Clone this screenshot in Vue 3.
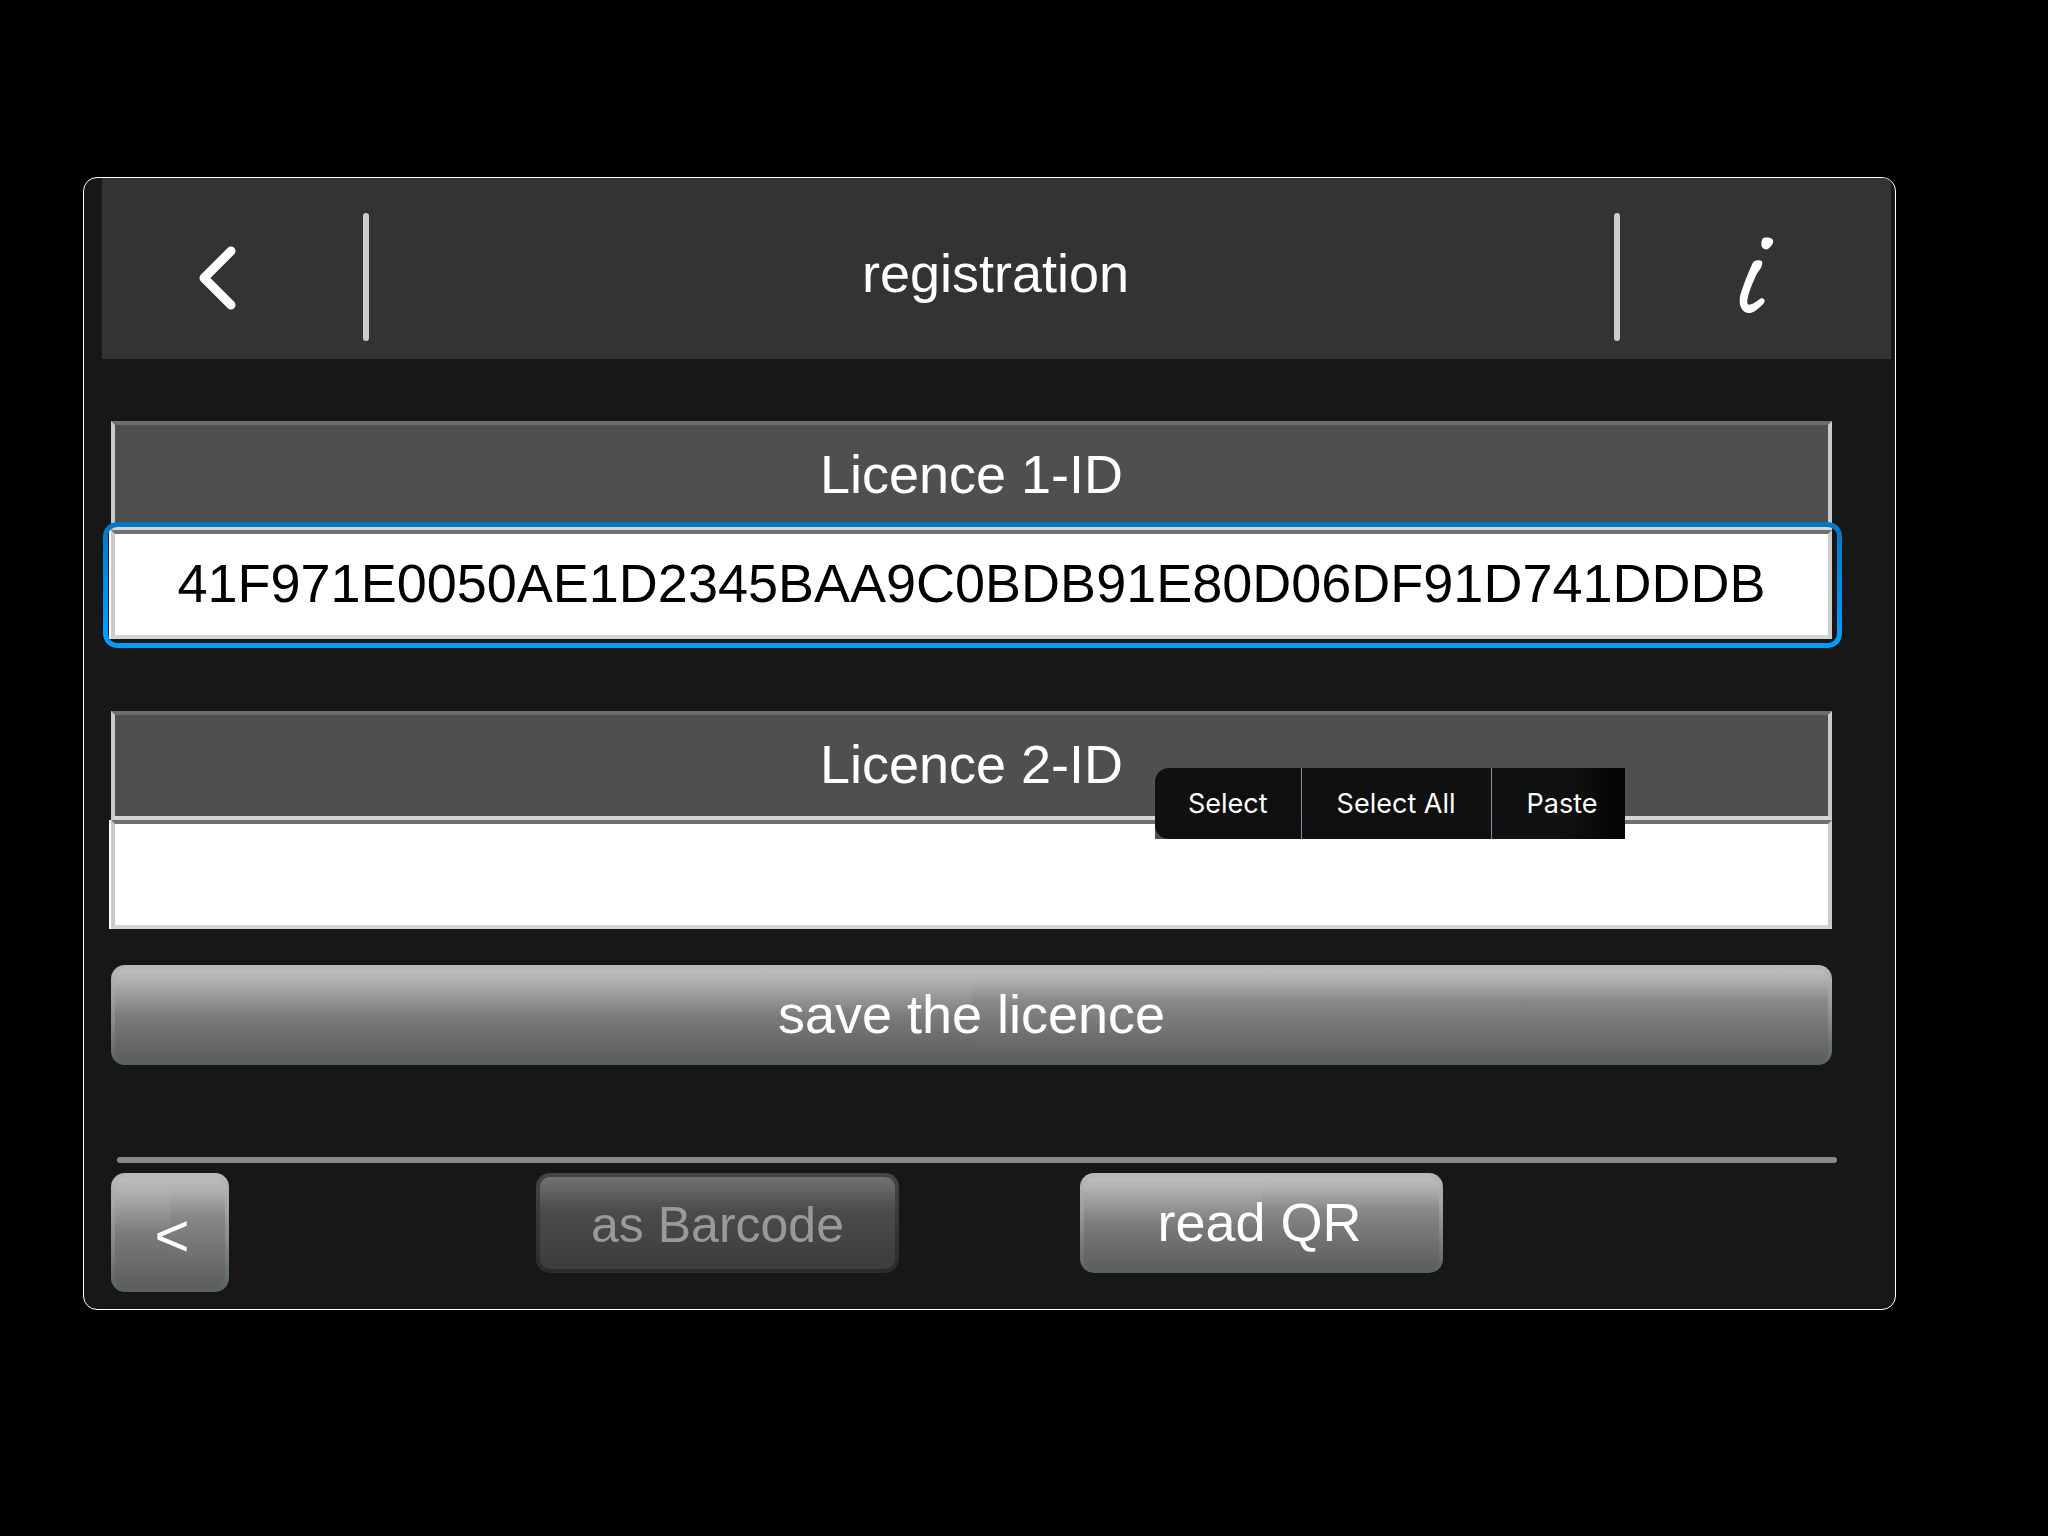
<script setup>
import { ref } from 'vue'

const licences = ref([
  { id: 'licence-1', label: 'Licence 1-ID', value: '41F971E0050AE1D2345BAA9C0BDB91E80D06DF91D741DDDB', active: true, menu: false },
  { id: 'licence-2', label: 'Licence 2-ID', value: '', active: false, menu: true },
])
const menuItems = ['Select', 'Select All', 'Paste']
</script>

<template>
  <div class="screen">
    <main class="panel">
      <header class="header">
        <button class="nav nav-back" type="button" aria-label="Back">
          <svg width="40" height="68" viewBox="0 0 40 68" fill="none" stroke="#fff" stroke-width="9" stroke-linecap="round" stroke-linejoin="round">
            <path d="M32 8 L5 35 L32 62" />
          </svg>
        </button>
        <span class="divider"></span>
        <h1 class="title">registration</h1>
        <span class="divider"></span>
        <button class="nav nav-info" type="button" aria-label="Information">
          <svg width="40" height="84" viewBox="0 4 120 252" fill="#fff">
            <path d="M84 12 C94 10 105 12 109 16 C114 23 111 31 106 36 C100 43 94 48 88 47 C80 46 76 39 76 31 C76 22 78 14 84 12 Z" />
            <path d="M53 84 C57 79 73 78 77 82 C81 86 78 97 74 104 C69 112 63 118 58 130 C48 153 38 175 34 199 C33 207 34 213 39 213 C49 213 64 201 73 195 C79 192 86 196 86 202 C86 206 82 211 76 216 C64 228 52 238 38 238 C24 238 12 224 11 204 C10 190 15 175 21 159 C30 134 40 111 47 95 C49 90 50 87 53 84 Z" />
          </svg>
        </button>
      </header>

      <section class="content">
        <div v-for="item in licences" :key="item.id" class="field">
          <label class="field-label" :for="item.id">{{ item.label }}</label>
          <div class="field-box">
            <input :id="item.id" v-model="item.value" class="field-input" type="text" autocomplete="off" spellcheck="false" />
            <span v-if="item.active" class="focus-ring"></span>
          </div>
          <div v-if="item.menu" class="menu">
            <button v-for="name in menuItems" :key="name" class="menu-item" type="button">{{ name }}</button>
          </div>
        </div>
        <button class="btn btn-save" type="button">save the licence</button>
      </section>

      <footer class="footer">
        <hr class="rule" />
        <div class="actions">
          <button class="btn btn-prev" type="button">&lt;</button>
          <button class="btn btn-wide btn-barcode" type="button" disabled>as Barcode</button>
          <button class="btn btn-wide btn-qr" type="button">read QR</button>
        </div>
      </footer>
    </main>
  </div>
</template>

<style>
body {
  background: #000;
}
</style>

<style scoped>
* {
  box-sizing: border-box;
}

.screen {
  min-height: 100vh;
  padding: 177px 152px 48px 83px;
  background: #000;
  font-family: "Liberation Sans", Arial, sans-serif;
  font-size: 54px;
  color: #fff;
}

button,
input {
  margin: 0;
  padding: 0;
  border: 0;
  font: inherit;
  color: inherit;
}

.panel {
  border: 1px solid #fff;
  border-radius: 14px;
  background: #171717;
  padding-bottom: 17px;
  overflow: hidden;
}

.header {
  display: flex;
  align-items: center;
  height: 181px;
  margin: 0 4px 0 18px;
  padding-top: 16px;
  background: #333;
}

.nav {
  display: flex;
  align-items: center;
  justify-content: center;
  height: 128px;
  background: none;
}

.nav-back {
  width: 261px;
  padding-right: 28px;
}

.nav-info {
  width: 271px;
}

.divider {
  width: 6px;
  height: 128px;
  border-radius: 3px;
  background: #ccc;
}

.title {
  flex: 1;
  margin: 0;
  padding: 0 0 8px 8px;
  font-size: 54px;
  font-weight: 400;
  line-height: 64px;
  text-align: center;
}

.content {
  display: flex;
  flex-direction: column;
  gap: 72px;
  margin: 62px 63px 0 27px;
}

.field {
  position: relative;
}

.field-label {
  display: block;
  height: 109px;
  border: 4px solid;
  border-color: #6d6e70 #c9cacc #d3d4d6;
  background: #4f4f4f;
  line-height: 99px;
  text-align: center;
}

.field-box {
  position: relative;
}

.field-input {
  display: block;
  width: 100%;
  height: 109px;
  padding-bottom: 4px;
  border: 4px solid;
  border-color: #707072 #c9cbcd #d3d4d5;
  border-radius: 0;
  background: #fff;
  box-shadow: -2px 0 0 #fff;
  color: #000;
  text-align: center;
  outline: none;
}

.focus-ring {
  position: absolute;
  inset: -8px -10px -9px -8px;
  border: 5px solid transparent;
  border-radius: 14px;
  background: linear-gradient(#0077c4, #009bff 85%) border-box;
  mask: linear-gradient(#000 0 0) padding-box exclude, linear-gradient(#000 0 0) border-box;
  pointer-events: none;
}

.menu {
  position: absolute;
  top: 57px;
  left: 1044px;
  display: flex;
  height: 71px;
  background: #505050;
  font-family: Inter, sans-serif;
  font-size: 27px;
}

.menu-item {
  padding: 0 35px;
  background: linear-gradient(#101010 60%, #0d1113);
}

.menu-item + .menu-item {
  border-left: 1px solid #8a8f91;
}

.menu-item:first-child {
  padding: 0 33px;
  border-radius: 14px 0 0 14px;
}

.menu-item:last-child {
  padding-right: 28px;
  background: linear-gradient(90deg, #101112 55%, #050505 90%);
}

.btn {
  height: 100px;
  padding-bottom: 2px;
  border: 4px solid transparent;
  border-radius: 14px;
  background:
    linear-gradient(#bcbcbc, #b4b4b4 10%, #7a7a7a 52%, #5d5d5d) left / 50% 100% no-repeat padding-box,
    linear-gradient(#bcbcbc, #b4b4b4 10%, #878787 36%, #5d5d5d) padding-box,
    linear-gradient(#b6babd, #a0a4a6 30%, #566064) border-box;
  text-align: center;
}

.btn-save {
  margin-top: -36px;
}

.footer {
  margin: 92px 58px 0 27px;
}

.rule {
  height: 6px;
  margin: 0 0 10px 6px;
  border: 0;
  border-radius: 3px;
  background: #8a8a8a;
}

.actions {
  display: flex;
  align-items: flex-start;
}

.btn-prev {
  width: 118px;
  height: 119px;
  padding: 6px 0 0 4px;
  font-size: 60px;
}

.btn-wide {
  width: 363px;
}

.btn-barcode {
  margin-left: 307px;
  padding: 4px 0 0;
  background:
    linear-gradient(#727272, #4b4b4b 37%, #3c3c3c) padding-box,
    linear-gradient(#444546, #292a2c) border-box;
  color: #999;
  font-size: 50px;
}

.btn-qr {
  margin-left: 181px;
  padding-right: 4px;
}
</style>
